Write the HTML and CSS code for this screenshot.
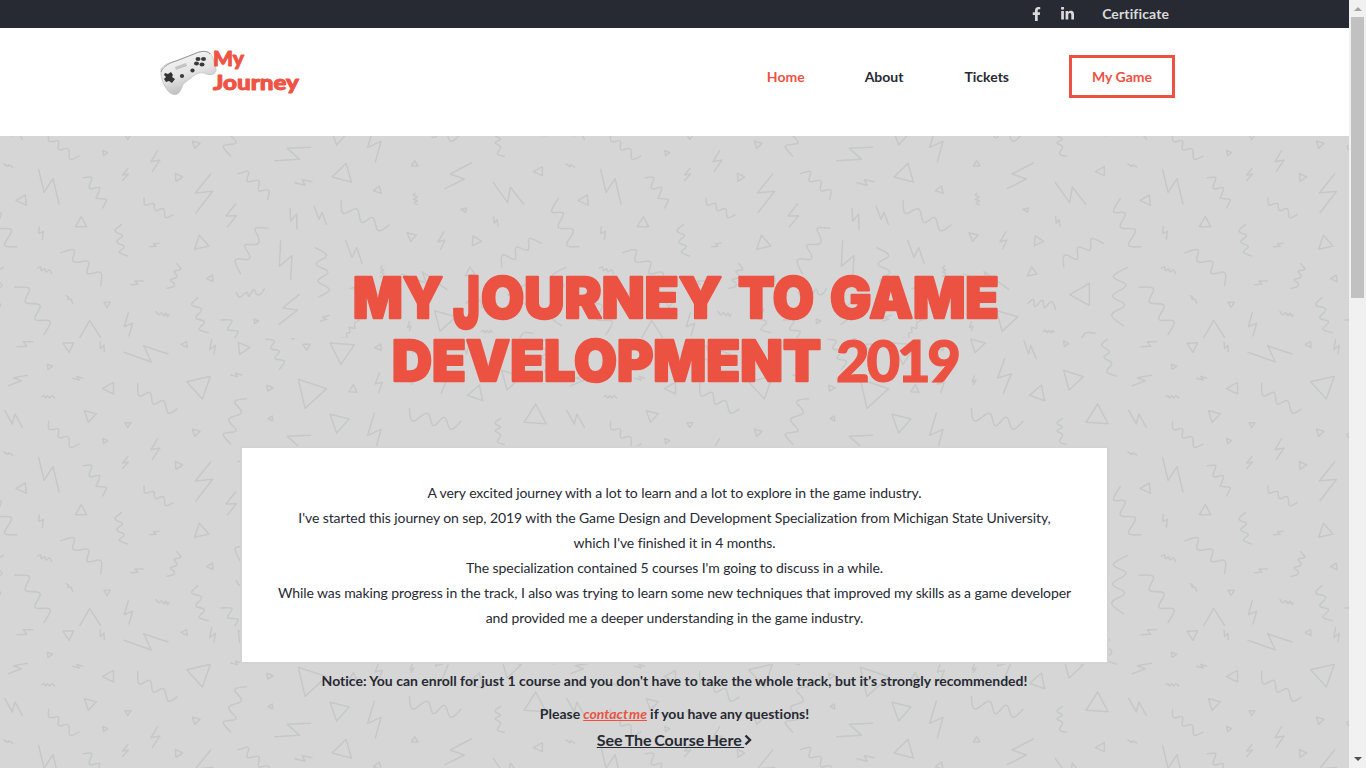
FILE: index.html
```html
<!DOCTYPE html>
<html lang="en">
<head>
<meta charset="utf-8">
<title>My Journey</title>
<link rel="stylesheet" href="styles.css">
</head>
<body>
<div class="window">
  <div class="page">
    <div class="topbar">
      <a class="social"><svg width="9" height="14" viewBox="0 0 320 512"><path d="M279 288l14-93h-89v-60c0-25 12-50 52-50h41V7s-37-7-72-7c-73 0-121 44-121 125v70H23v93h81v224h100V288z"/></svg></a>
      <a class="social linkedin"><svg width="13" height="14" viewBox="0 0 448 448"><path d="M100 416H7V117h93zM54 77C24 77 0 52 0 22a54 54 0 01108 0c0 30-25 55-54 55zm394 339h-93V271c0-35-1-79-48-79-49 0-56 38-56 77v147h-93V117h89v41h1c13-24 43-48 88-48 94 0 112 62 112 142z"/></svg></a>
      <a class="cert">Certificate</a>
    </div>
    <header class="header">
      <svg class="logo" width="142" height="50" viewBox="0 0 142 50">
        <defs><linearGradient id="pad" x1="0" y1="0" x2=".4" y2="1"><stop offset="0" stop-color="#fafafa"/><stop offset=".6" stop-color="#e4e4e4"/><stop offset="1" stop-color="#b9b9b9"/></linearGradient></defs>
        <path d="M3 20C6 15 13 13 18 12L36 5C42 2 50 1 53 5C56 11 58 17 58 22C56 27 50 26 46 24C41 23 36 26 33 29C28 33 25 34 24 38C22 44 19 47 14 45C8 42 5 34 3 27Z" transform="translate(-2 -1)" fill="url(#pad)" stroke="#c4c4c4" stroke-width=".8"/>
        <path d="M1 22C3 16 10 13 16 11L34 4C40 1 47 0 50 4" fill="none" stroke="#8a8a8a" stroke-width=".8"/>
        <path d="M15 17l11-4 1 3-11 4z" fill="#c3c3c3"/>
        <path d="M5 23l3 1 3-2 2 3-1 2 3 2-3 4-3-2-3 1-2-3 2-2-2-2z" fill="#333"/>
        <g fill="#3a3a3a"><circle cx="22" cy="26" r="2.100"/><circle cx="32.500" cy="20.500" r="2.100"/><ellipse cx="38" cy="9" rx="2.500" ry="1.900"/><ellipse cx="43.500" cy="9" rx="2.500" ry="1.900"/><ellipse cx="36.500" cy="13.500" rx="2.500" ry="1.900"/><ellipse cx="42" cy="14.500" rx="2.500" ry="1.900"/></g>
        <g class="logo-text"><text x="53" y="15.500" textLength="31" lengthAdjust="spacingAndGlyphs">My</text><text x="53" y="39.500" textLength="86" lengthAdjust="spacingAndGlyphs">Journey</text></g>
      </svg>
      <nav class="nav"><a class="active">Home</a><a class="about">About</a><a>Tickets</a><a class="game">My Game</a></nav>
    </header>
    <main class="hero">
      <svg class="confetti" width="1349" height="632">
        <defs><pattern id="shapes" x="0" y="-240" width="1686" height="864" viewBox="0 -240 1686 864" patternUnits="userSpaceOnUse" patternTransform="translate(0 -6) scale(.333333)"><g id="strokes"></g></pattern></defs>
        <rect width="1349" height="632" fill="url(#shapes)"/>
      </svg>
      <h1 class="title">
        <svg width="660" height="126" viewBox="0 0 660 126">
          <g class="display">
            <text x="8" y="51" textLength="90" lengthAdjust="spacingAndGlyphs">MY</text>
            <text x="108" y="61" class="tall" textLength="27" lengthAdjust="spacingAndGlyphs">J</text>
            <text x="136" y="51" textLength="241" lengthAdjust="spacingAndGlyphs">OURNEY</text>
            <text x="393" y="51" textLength="76" lengthAdjust="spacingAndGlyphs">TO</text>
            <text x="485" y="51" textLength="169" lengthAdjust="spacingAndGlyphs">GAME</text>
            <text x="47" y="114" textLength="429" lengthAdjust="spacingAndGlyphs">DEVELOPMENT</text>
          </g>
          <text class="year" x="491" y="115" textLength="125">2019</text>
        </svg>
      </h1>
      <section class="card">A very excited journey with a lot to learn and a lot to explore in the game industry.<br>I've started this journey on sep, 2019 with the Game Design and Development Specialization from Michigan State University,<br>which I've finished it in 4 months.<br>The specialization contained 5 courses I'm going to discuss in a while.<br>While was making progress in the track, I also was trying to learn some new techniques that improved my skills as a game developer<br>and provided me a deeper understanding in the game industry.</section>
      <p class="notice">Notice: You can enroll for just 1 course and you don't have to take the whole track, but it's strongly recommended!</p>
      <p class="notice contact">Please <a>contact me</a> if you have any questions!</p>
      <p class="course"><a>See The Course Here </a><svg width="8" height="12" viewBox="0 0 8 12"><path d="M1.500 1.500L6 6L1.500 10.500" fill="none" stroke="#272a33" stroke-width="2.400"/></svg></p>
    </main>
  </div>
  <div class="scrollbar"><i class="up"></i><div class="thumb"></div><i class="down"></i></div>
</div>
<script src="pattern.js"></script>
</body>
</html>
```
FILE: styles.css
```css
* { box-sizing: border-box; }
body { margin: 0; overflow: hidden; font-family: Lato, sans-serif; font-size: 14px; color: #272a33; }
.window { display: flex; width: 1366px; height: 768px; }
.page { width: 1349px; height: 768px; overflow: hidden; background: #fff; }
.topbar { height: 28px; background: #272a33; display: flex; align-items: center; justify-content: flex-end; padding-right: 180px; color: #dadada; font-weight: 700; }
.social { display: flex; fill: #dadada; margin-right: 20px; }
.linkedin { margin-right: 28px; }
.linkedin svg { margin-top: -1px; }
.cert { line-height: 28px; letter-spacing: .12px; font-variant-ligatures: none; }
.header { height: 108px; display: flex; justify-content: space-between; align-items: flex-start; padding: 0 174px 0 160px; }
.logo { margin-top: 22px; overflow: visible; }
.logo-text { font-family: Lato, sans-serif; font-weight: 900; font-size: 20px; fill: #ee5344; stroke: #ee5344; stroke-width: .9; stroke-linejoin: round; }
.nav { display: flex; align-items: center; gap: 60px; margin-top: 27px; font-weight: 700; }
.about { margin-right: 1px; }
.nav .active { color: #ec5242; }
.nav .game { color: #ec5242; border: 3px solid #ec5242; width: 106px; height: 43px; line-height: 37px; text-align: center; }
.hero { position: relative; height: 632px; background: #d6d6d6; display: flex; flex-direction: column; align-items: center; }
.confetti { position: absolute; left: 0; top: 0; }
#strokes { fill: none; stroke: #c6c8c8; stroke-width: 4.6; stroke-linecap: round; stroke-linejoin: round; }
.title { position: relative; margin: 131px 0 0; height: 126px; }
.title svg { display: block; overflow: visible; }
.display { font-family: Inter, Lato, sans-serif; font-weight: 900; font-size: 57px; fill: #ec5242; stroke: #ec5242; stroke-width: 2.4; stroke-linejoin: round; }
.tall { font-size: 71px; }
.year { font-family: Lato, sans-serif; font-weight: 900; font-size: 58px; fill: #ec5242; stroke: #ec5242; stroke-width: 1.2; }
.card { position: relative; width: 865px; height: 214px; margin-top: 55px; padding-top: 32px; background: #fff; box-shadow: 0 0 0 2px #d3d3d3; line-height: 25px; text-align: center; white-space: nowrap; letter-spacing: -.09px; }
.notice { position: relative; margin: 6px 0 0; line-height: 25px; font-weight: 700; font-variant-ligatures: none; }
.contact { margin-top: 8px; word-spacing: -.3px; }
.contact a { color: #ec5242; font-style: italic; text-decoration: underline; word-spacing: -2px; }
.course { position: relative; margin: 1px 0 0; line-height: 25px; font-size: 16px; font-weight: 700; white-space: pre; word-spacing: -1.4px; }
.course a { text-decoration: underline; }
.scrollbar { width: 17px; height: 768px; background: #f1f1f1; display: flex; flex-direction: column; align-items: center; }
.up { border: 4px solid transparent; border-top: 0; border-bottom: 4px solid #a3a3a3; margin: 7px 0 6px; }
.thumb { width: 13px; height: 281px; background: #c1c1c1; }
.down { border: 4px solid transparent; border-bottom: 0; border-top: 4px solid #505050; margin: auto 0 7px; }
```
FILE: pattern.js
```js
// Confetti tile: open and closed polylines, and smooth squiggles.
// Each group has its own origin inside the tile.
const groups = [
  { dx: 0, dy: 0,
    lines: `116 118 132 187 159 146 177 222|48 211 76 195 79 226 z|244 260 226 290 260 290 z|118 290 116 311 130 304 127 329|12 102 24 110 26 104 38 111|308 61 323 68 311 77 z|473 62 453 95 480 90 457 124|384 115 368 135 386 132 368 151|577 33 600 40 584 55 z|526 130 548 141 528 154 z|632 132 586 189 638 184 588 248|707 221 678 258 710 257 682 290|932 52 862 55 899 88 824 92|885 158 915 166 907 149 936 155|1038 100 996 141 1054 156 z|1138 168 1120 182 1144 190 z|870 235 872 273 890 252 891 298|942 228 957 268 966 247 979 283|842 332 838 409 876 377 872 448|1037 332 1056 382 1070 352 1086 400|598 316 584 358 627 348 z|477 340 460 341 468 349 449 350|430 453 405 453 414 463 391 464|637 435 620 446 639 455 z|898 493 848 534 893 540 837 583|988 556 968 562 980 568 962 573|385 548 373 590 398 580 387 618|312 517 331 517 321 532 z|762 567 776 573 764 581 z|238 626 269 571 304 626|1050 476 1062 472 1064 482`,
    curves: `249 143 275 143 268 167 272 177 298 173 292 196 290 205 318 208 314 222 308 234|432 204 436 225 460 220 466 242 490 236 497 263 519 254|364 284 346 300 350 308 368 316 354 330 352 338 373 350 358 366 382 378|182 368 222 360 220 395 265 395 262 430 302 428 302 467|45 472 88 476 76 516 120 526 105 568 150 574 132 614|112 415 122 411 124 422 134 416 137 426 148 420 155 430|198 497 206 501 203 507 213 508 218 520|468 545 476 554 485 548 492 557 498 549 503 559 507 554|530 401 542 415 538 420 522 424 532 438 526 444 510 450 522 460 520 470 501 475|594 503 576 520 580 528 605 538 588 560 592 567 614 576 597 598 625 608|715 131 745 125 742 154 776 152 776 182 806 180 803 208|804 295 766 295 776 325 772 342 735 346 748 375 745 388 706 390 722 432|709 487 719 501 740 487 747 499 762 478 770 494 784 490 793 476|1023 211 1030 250 1070 237 1085 277 1118 263 1135 302 1167 285|945 353 980 376 948 402 984 426 954 453 988 478 956 501|1147 408 1142 416 1152 420 1142 426 1152 431 1142 440|663 570 696 572 683 598 714 604 703 625|1080 570 1064 580 1064 595 1048 592 1050 606 1040 610 1040 624 1024 624` },
  { dx: 0, dy: -864,
    lines: `98 635 70 635 80 649 51 650|189 640 221 638 207 667 z|300 636 302 656 312 645 313 665|142 703 158 709 144 718 z|82 736 40 743 64 752 25 767|218 745 238 750 230 739 248 745|372 667 454 696 431 647 504 672|560 635 561 653 543 643 z|635 629 629 659 646 646 642 672|340 757 341 792 307 776 z|560 755 631 739 607 807 z|715 637 750 652 719 673 z|909 643 930 643 920 661 z|990 639 1063 644 1023 703 z|1143 642 1143 662 1124 653 z|693 735 712 740 707 729 725 735|800 766 820 773 803 783 z|895 748 980 776 915 835 z|1060 764 1047 785 1071 787 z|1138 729 1126 762 1147 757 1136 788|253 842 289 851 265 877 z|375 878 393 878 383 893 z|14 841 37 882 45 852 67 892|817 858 818 873 804 866 z|990 853 1047 867 1010 909 z|1123 850 1103 916 1143 898 1126 960|875 626 882 626`,
    curves: `798 628 823 633 812 655 838 664 825 685 853 694 838 718|413 760 418 798 450 787 460 822 490 812 505 849 531 837|740 806 704 815 724 848 686 868 708 902 670 912 692 942|146 874 148 898 175 897 176 923 205 921 210 952 237 942|126 800 132 797 137 804 143 797 149 804 155 797 164 804` },
  { dx: 1200, dy: 0,
    lines: `44 92 34 108 54 108 z|214 99 150 132 193 147 135 176|280 158 323 218 331 171 371 223|427 110 427 137 400 125 z|183 238 199 234 197 247 z|281 260 283 280 291 268 294 288|21 308 49 315 32 334 z|131 306 114 336 135 330 122 357|219 317 245 334 217 347 z|209 411 196 438 225 432 z|382 460 323 494 382 526 z|104 542 168 560 120 604 z|5 433 80 460 66 425 141 479|28 575 23 592 33 588 28 602`,
    curves: `475 205 455 245 490 250 475 292 520 300 500 345 537 350|305 411 308 375 345 388 348 352 384 360 388 326 424 340|45 190 40 196 52 201 40 208 52 212 42 219 52 224|497 412 454 440 492 466 451 498 488 525 449 555 484 587|198 520 214 508 219 530 241 510 247 533 266 515 274 520 281 538|244 605 250 601 255 608 261 601 267 608 272 601 276 608|359 625 372 608 399 610` },
  { dx: 1200, dy: -864,
    lines: `26 628 70 639 39 668 z|186 632 200 672 206 646 223 686|305 633 320 641 307 650 z|128 686 107 744 148 731 124 790|305 721 364 740 321 780 z|238 765 202 796 248 812 z|37 738 30 756 42 750 34 764|407 822 372 877 438 881 z`,
    curves: `436 628 419 645 442 665 426 682 449 700 434 725 462 738|28 835 38 873 82 850 100 887 133 862 152 898 183 874|302 865 285 880 302 892 285 902 302 915 292 935 313 943` }
];

function smooth(p) {
  let d = `M${p[0]}`;
  for (let i = 0; i < p.length - 1; i++) {
    const a = p[i - 1] || p[i], b = p[i], c = p[i + 1], e = p[i + 2] || c;
    d += `C${b[0] + (c[0] - a[0]) / 5} ${b[1] + (c[1] - a[1]) / 5} ${c[0] - (e[0] - b[0]) / 5} ${c[1] - (e[1] - b[1]) / 5} ${c}`;
  }
  return d;
}

function points(s) {
  const n = s.trim().split(/\s+/).map(Number), out = [];
  for (let i = 0; i < n.length; i += 2) out.push([n[i], n[i + 1]]);
  return out;
}

let markup = '';
for (const g of groups) {
  let d = g.lines.split('|').map(s => 'M' + s).join('');
  d += g.curves.split('|').map(s => smooth(points(s))).join('');
  markup += `<path transform="translate(${g.dx} ${g.dy})" d="${d}"/>`;
  // Squiggles that run over the right edge continue on the left.
  if (g.dx) markup += `<path transform="translate(${g.dx - 1686} ${g.dy})" d="${d}"/>`;
}
document.getElementById('strokes').innerHTML = markup;
```
